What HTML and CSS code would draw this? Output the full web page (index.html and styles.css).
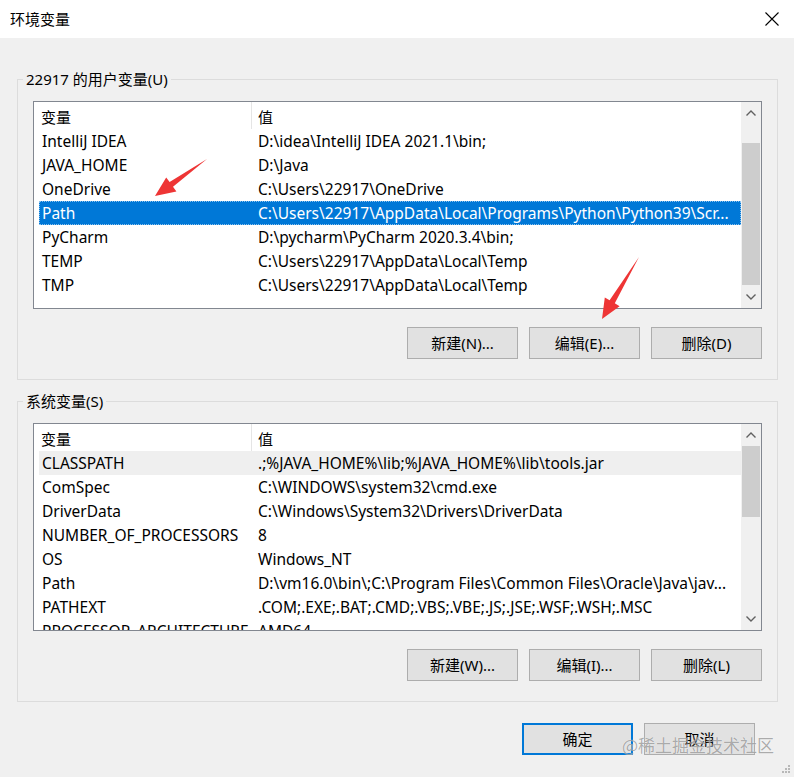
FILE: index.html
```html
<!DOCTYPE html>
<html lang="zh-CN">
<head>
<meta charset="utf-8">
<title>环境变量</title>
<link rel="stylesheet" href="styles.css">
</head>
<body>
<div class="window">
  <div class="titlebar">
    <span class="title">环境变量</span>
    <svg class="close" width="14" height="14" viewBox="0 0 14 14"><path d="M0.5 0.5 L13.5 13.5 M13.5 0.5 L0.5 13.5" stroke="#000" stroke-width="1.1" fill="none"/></svg>
  </div>
  <div class="main">
    <fieldset class="group">
      <legend class="legend">22917 的用户变量(U)</legend>
      <div class="group-body">
        <div class="list">
          <div class="list-main">
            <div class="header">
              <div class="hcol hname">变量</div>
              <div class="hcol hval">值</div>
            </div>
            <div class="rows">
              <div class="row"><span class="c-name">IntelliJ IDEA</span><span class="c-val">D:\idea\IntelliJ IDEA 2021.1\bin;</span></div>
              <div class="row"><span class="c-name">JAVA_HOME</span><span class="c-val">D:\Java</span></div>
              <div class="row"><span class="c-name">OneDrive</span><span class="c-val">C:\Users\22917\OneDrive</span></div>
              <div class="row selected"><span class="c-name">Path</span><span class="c-val">C:\Users\22917\AppData\Local\Programs\Python\Python39\Scr...</span></div>
              <div class="row"><span class="c-name">PyCharm</span><span class="c-val">D:\pycharm\PyCharm 2020.3.4\bin;</span></div>
              <div class="row"><span class="c-name">TEMP</span><span class="c-val">C:\Users\22917\AppData\Local\Temp</span></div>
              <div class="row"><span class="c-name">TMP</span><span class="c-val">C:\Users\22917\AppData\Local\Temp</span></div>
            </div>
          </div>
          <div class="scrollbar">
            <div class="sb-btn"><svg width="10" height="6" viewBox="0 0 10 6"><polyline points="0.5,5.5 5,1 9.5,5.5" fill="none" stroke="#606060" stroke-width="1.4"/></svg></div>
            <div class="sb-track"><div class="thumb thumb-user"></div></div>
            <div class="sb-btn"><svg width="10" height="6" viewBox="0 0 10 6"><polyline points="0.5,0.5 5,5 9.5,0.5" fill="none" stroke="#606060" stroke-width="1.4"/></svg></div>
          </div>
        </div>
        <div class="btn-row">
          <button class="btn">新建(N)...</button>
          <button class="btn">编辑(E)...</button>
          <button class="btn">删除(D)</button>
        </div>
      </div>
    </fieldset>

    <fieldset class="group group-sys">
      <legend class="legend">系统变量(S)</legend>
      <div class="group-body">
        <div class="list">
          <div class="list-main">
            <div class="header">
              <div class="hcol hname">变量</div>
              <div class="hcol hval">值</div>
            </div>
            <div class="rows">
              <div class="row hover"><span class="c-name">CLASSPATH</span><span class="c-val">.;%JAVA_HOME%\lib;%JAVA_HOME%\lib\tools.jar</span></div>
              <div class="row"><span class="c-name">ComSpec</span><span class="c-val">C:\WINDOWS\system32\cmd.exe</span></div>
              <div class="row"><span class="c-name">DriverData</span><span class="c-val">C:\Windows\System32\Drivers\DriverData</span></div>
              <div class="row"><span class="c-name">NUMBER_OF_PROCESSORS</span><span class="c-val">8</span></div>
              <div class="row"><span class="c-name">OS</span><span class="c-val">Windows_NT</span></div>
              <div class="row"><span class="c-name">Path</span><span class="c-val">D:\vm16.0\bin\;C:\Program Files\Common Files\Oracle\Java\jav...</span></div>
              <div class="row"><span class="c-name">PATHEXT</span><span class="c-val">.COM;.EXE;.BAT;.CMD;.VBS;.VBE;.JS;.JSE;.WSF;.WSH;.MSC</span></div>
              <div class="row"><span class="c-name">PROCESSOR_ARCHITECTURE</span><span class="c-val">AMD64</span></div>
            </div>
          </div>
          <div class="scrollbar">
            <div class="sb-btn"><svg width="10" height="6" viewBox="0 0 10 6"><polyline points="0.5,5.5 5,1 9.5,5.5" fill="none" stroke="#606060" stroke-width="1.4"/></svg></div>
            <div class="sb-track"><div class="thumb thumb-sys"></div></div>
            <div class="sb-btn"><svg width="10" height="6" viewBox="0 0 10 6"><polyline points="0.5,0.5 5,5 9.5,0.5" fill="none" stroke="#606060" stroke-width="1.4"/></svg></div>
          </div>
        </div>
        <div class="btn-row">
          <button class="btn">新建(W)...</button>
          <button class="btn">编辑(I)...</button>
          <button class="btn">删除(L)</button>
        </div>
      </div>
    </fieldset>

    <div class="footer">
      <button class="btn btn-default">确定</button>
      <button class="btn">取消</button>
    </div>
  </div>

  <svg class="annotations" width="794" height="777" viewBox="0 0 794 777">
    <polygon points="207,159 169.6,182.0 166.2,177.4 155,196 176.4,191.4 173.0,186.8" fill="#ee3535"/>
    <polygon points="639,257 609.6,300.3 604.8,297.4 602,319 619.6,306.2 614.8,303.3" fill="#ee3535"/>
  </svg>
  <div class="watermark">@稀土掘金技术社区</div>
  <svg class="grip" width="10" height="10" viewBox="0 0 10 10">
    <rect x="7" y="1" width="2" height="2" fill="#b8b8b8"/>
    <rect x="4" y="4" width="2" height="2" fill="#b8b8b8"/>
    <rect x="7" y="4" width="2" height="2" fill="#b8b8b8"/>
    <rect x="1" y="7" width="2" height="2" fill="#b8b8b8"/>
    <rect x="4" y="7" width="2" height="2" fill="#b8b8b8"/>
    <rect x="7" y="7" width="2" height="2" fill="#b8b8b8"/>
  </svg>
</div>
</body>
</html>
```

FILE: styles.css
```css
* { box-sizing: border-box; }

html, body {
  margin: 0;
  padding: 0;
}

body {
  width: 794px;
  height: 777px;
  overflow: hidden;
  background: #f0f0f0;
  font-family: "Noto Sans", "Noto Sans CJK SC", sans-serif;
  font-size: 15px;
  color: #000;
}

.window {
  position: relative;
  width: 794px;
  height: 777px;
  background: #f0f0f0;
}

.titlebar {
  height: 38px;
  background: #fff;
  display: flex;
  align-items: center;
  justify-content: space-between;
  padding: 0 15px 0 10px;
}

.title {
  font-size: 15px;
  font-family: "Noto Sans CJK SC", sans-serif;
  line-height: 20px;
}

.close { display: block; }

.main {
  padding: 31px 16px 0 17px;
}

.group {
  margin: 0;
  padding: 0;
  border: 1px solid #dcdcdc;
  min-width: 0;
}

.group-sys {
  margin-top: 11px;
}

.legend {
  margin-left: 5px;
  padding: 0 3px;
  line-height: 20px;
  font-size: 15px;
  font-family: "Noto Sans", "Noto Sans CJK SC", sans-serif;
}

.group-body {
  padding: 12px 15px 20px 15px;
}

.list {
  height: 208px;
  border: 1px solid #828790;
  background: #fff;
  display: flex;
}

.list-main {
  flex: 1;
  min-width: 0;
  overflow: hidden;
}

.header {
  height: 27px;
  display: flex;
}

.hcol {
  display: flex;
  align-items: center;
  padding-top: 2px;
  line-height: 20px;
  font-family: "Noto Sans CJK SC", sans-serif;
}

.hname {
  width: 218px;
  padding-left: 7px;
  border-right: 1px solid #e5e5e5;
}

.hval {
  padding-left: 6px;
}

.rows {
  padding-left: 5px;
  font-size: 15.5px;
}

.row {
  height: 24px;
  display: flex;
  align-items: center;
  white-space: nowrap;
  line-height: 20px;
}

.row.selected {
  background: #0078d7;
  color: #fff;
  outline: 1px dotted rgba(255, 255, 255, 0.55);
  outline-offset: -1px;
}

.row.hover {
  background: #efefef;
}

.c-name {
  width: 216px;
  padding-left: 3px;
  overflow: hidden;
  flex: none;
}

.c-val {
  flex: 1;
  min-width: 0;
  padding-left: 3px;
  overflow: hidden;
}

.scrollbar {
  width: 20px;
  flex: none;
  background: #f0f0f0;
  display: flex;
  flex-direction: column;
}

.sb-btn {
  height: 22px;
  display: flex;
  align-items: center;
  justify-content: center;
  flex: none;
}

.sb-btn svg { display: block; }

.sb-track {
  flex: 1;
  position: relative;
}

.thumb {
  background: #cdcdcd;
  margin: 0 1px;
}

.thumb-user {
  margin-top: 19px;
  height: 142px;
}

.thumb-sys {
  margin-top: 0;
  height: 71px;
}

.btn-row {
  display: flex;
  justify-content: flex-end;
  gap: 11px;
  margin-top: 18px;
}

.btn {
  width: 111px;
  height: 32px;
  background: #e1e1e1;
  border: 1px solid #adadad;
  font-family: "Noto Sans", "Noto Sans CJK SC", sans-serif;
  font-size: 15px;
  color: #000;
  padding: 0;
  margin: 0;
  line-height: 20px;
}

.btn-default {
  border: 2px solid #0078d7;
}

.footer {
  display: flex;
  justify-content: flex-end;
  gap: 11px;
  margin-top: 21px;
  padding-right: 23px;
}

.annotations {
  position: absolute;
  left: 0;
  top: 0;
  pointer-events: none;
}

.watermark {
  position: absolute;
  left: 622px;
  top: 733px;
  font-family: "Noto Sans CJK SC", sans-serif;
  font-size: 17px;
  line-height: 24px;
  color: rgba(70, 70, 70, 0.45);
  text-shadow: 0 0 1px rgba(255, 255, 255, 0.9);
  pointer-events: none;
}

.grip {
  position: absolute;
  right: 3px;
  bottom: 3px;
}
```
